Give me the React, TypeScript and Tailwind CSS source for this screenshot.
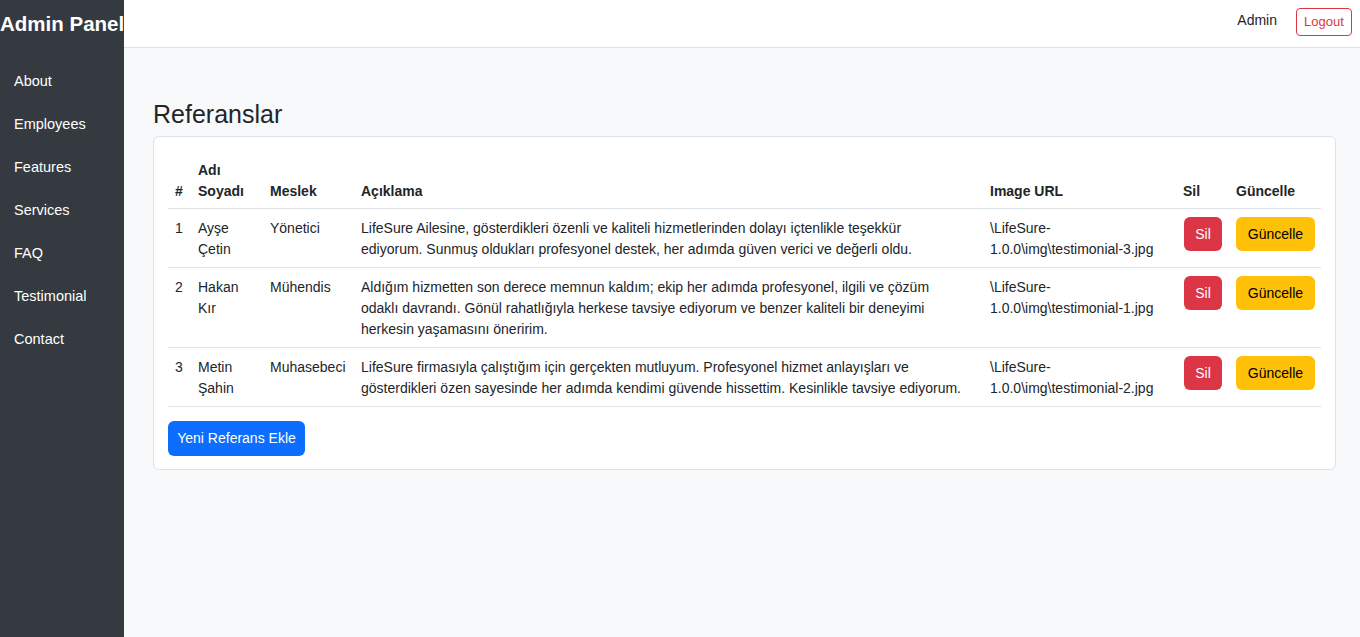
const navItems = ["About", "Employees", "Features", "Services", "FAQ", "Testimonial", "Contact"];

interface Referans {
  id: number;
  name: string;
  job: string;
  lines: string[];
  img: string;
}

const rows: Referans[] = [
  {
    id: 1,
    name: "Ayşe Çetin",
    job: "Yönetici",
    lines: [
      "LifeSure Ailesine, gösterdikleri özenli ve kaliteli hizmetlerinden dolayı içtenlikle teşekkür",
      "ediyorum. Sunmuş oldukları profesyonel destek, her adımda güven verici ve değerli oldu.",
    ],
    img: "testimonial-3.jpg",
  },
  {
    id: 2,
    name: "Hakan Kır",
    job: "Mühendis",
    lines: [
      "Aldığım hizmetten son derece memnun kaldım; ekip her adımda profesyonel, ilgili ve çözüm",
      "odaklı davrandı. Gönül rahatlığıyla herkese tavsiye ediyorum ve benzer kaliteli bir deneyimi",
      "herkesin yaşamasını öneririm.",
    ],
    img: "testimonial-1.jpg",
  },
  {
    id: 3,
    name: "Metin Şahin",
    job: "Muhasebeci",
    lines: [
      "LifeSure firmasıyla çalıştığım için gerçekten mutluyum. Profesyonel hizmet anlayışları ve",
      "gösterdikleri özen sayesinde her adımda kendimi güvende hissettim. Kesinlikle tavsiye ediyorum.",
    ],
    img: "testimonial-2.jpg",
  },
];

function Sidebar() {
  return (
    <aside className="w-[124px] shrink-0 bg-[#343a40] overflow-hidden">
      <div className="h-[48px] flex items-center whitespace-nowrap text-white text-[20.5px] font-bold">
        Admin Panel
      </div>
      <nav className="mt-[12.5px]">
        {navItems.map((item) => (
          <div key={item} className="h-[43px] flex items-center pl-[14px] text-white text-[14.5px]">
            {item}
          </div>
        ))}
      </nav>
    </aside>
  );
}

function Topbar() {
  return (
    <header className="h-[48px] shrink-0 bg-white border-b border-[#dee2e6] flex items-start justify-end pt-[8px]">
      <span className="mt-[2px] leading-[21px] text-[14px] text-[#212529]">Admin</span>
      <button className="ml-[19px] mr-[8px] h-[28px] w-[56px] rounded-[4px] border border-[#dc3545] text-[#dc3545] text-[13px] flex items-center justify-center">
        Logout
      </button>
    </header>
  );
}

function ReferansTable() {
  return (
    <table className="w-full table-fixed border-collapse text-[14px] leading-[21px] text-[#212529]">
      <colgroup>
        <col className="w-[23px]" />
        <col className="w-[72px]" />
        <col className="w-[91px]" />
        <col className="w-[629px]" />
        <col className="w-[193px]" />
        <col className="w-[53px]" />
        <col />
      </colgroup>
      <thead>
        <tr className="border-b border-[#dee2e6]">
          {["#", "Adı Soyadı", "Meslek", "Açıklama", "Image URL", "Sil", "Güncelle"].map((h) => (
            <th key={h} className="pt-[9px] pb-[6px] pl-[7px] pr-[8px] text-left align-bottom font-bold">
              {h}
            </th>
          ))}
        </tr>
      </thead>
      <tbody>
        {rows.map((r) => (
          <tr key={r.id} className="border-b border-[#dee2e6]">
            <td className="pt-[9px] pb-[7px] pl-[7px] pr-[8px] align-top">{r.id}</td>
            <td className="pt-[9px] pb-[7px] pl-[7px] pr-[8px] align-top">{r.name}</td>
            <td className="pt-[9px] pb-[7px] pl-[7px] pr-[8px] align-top">{r.job}</td>
            <td className="pt-[9px] pb-[7px] pl-[7px] pr-[8px] align-top">
              {r.lines.map((l, i) => (
                <span key={i} className="block whitespace-nowrap">
                  {l}
                </span>
              ))}
            </td>
            <td className="pt-[9px] pb-[7px] pl-[7px] pr-[8px] align-top">
              <span className="block whitespace-nowrap">{"\\LifeSure-"}</span>
              <span className="block whitespace-nowrap">{"1.0.0\\img\\" + r.img}</span>
            </td>
            <td className="p-[8px] align-top">
              <button className="h-[34px] w-[38px] rounded-[6px] bg-[#dc3545] text-white flex items-center justify-center">
                Sil
              </button>
            </td>
            <td className="p-[8px] pl-[7px] align-top">
              <button className="h-[34px] w-[79px] rounded-[6px] bg-[#ffc107] text-black flex items-center justify-center">
                Güncelle
              </button>
            </td>
          </tr>
        ))}
      </tbody>
    </table>
  );
}

export default function App() {
  return (
    <div className="flex h-[637px] font-['Liberation_Sans',Arial,sans-serif]">
      <Sidebar />
      <div className="flex-1 flex flex-col bg-[#f8f9fa]">
        <Topbar />
        <main className="pl-[29px] pr-[24px] pt-[51px]">
          <h2 className="text-[25px] leading-[30px] text-[#212529] mb-[7px]">Referanslar</h2>
          <div className="bg-white border border-[#dee2e6] rounded-[6px] px-[14px] pt-[14px] pb-[13px]">
            <ReferansTable />
            <button className="mt-[14px] h-[35px] w-[137px] rounded-[6px] bg-[#0d6efd] text-white text-[14px] flex items-center justify-center">
              Yeni Referans Ekle
            </button>
          </div>
        </main>
      </div>
    </div>
  );
}
